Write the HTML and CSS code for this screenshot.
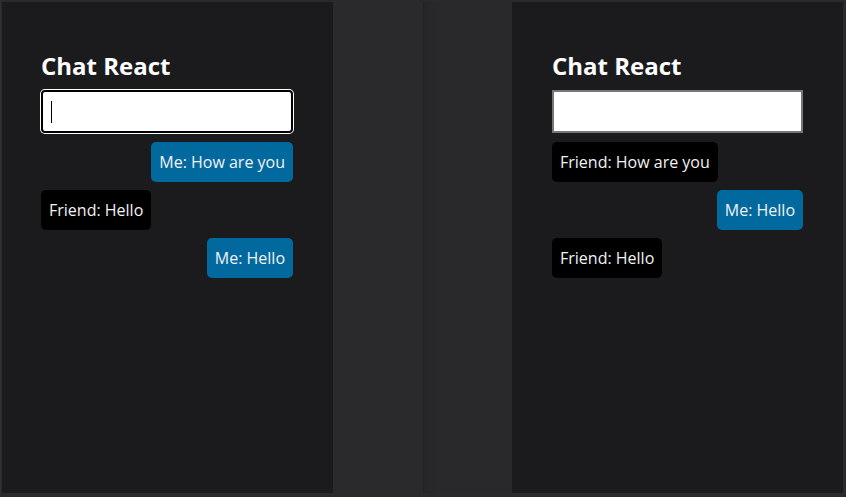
FILE: index.html
```html
<!DOCTYPE html>
<html>
<head>
<meta charset="utf-8">
<link rel="stylesheet" href="styles.css">
</head>
<body>
<div class="frame">
  <div class="half half-left">
    <div class="panel">
      <h2 class="title">Chat React</h2>
      <div class="input focused"><span class="caret"></span></div>
      <div class="messages">
        <div class="msg me">Me: How are you</div>
        <div class="msg friend">Friend: Hello</div>
        <div class="msg me">Me: Hello</div>
      </div>
    </div>
  </div>
  <div class="half half-right">
    <div class="panel">
      <h2 class="title">Chat React</h2>
      <div class="input"></div>
      <div class="messages">
        <div class="msg friend">Friend: How are you</div>
        <div class="msg me">Me: Hello</div>
        <div class="msg friend">Friend: Hello</div>
      </div>
    </div>
  </div>
</div>
</body>
</html>
```
FILE: styles.css
```css
html, body {
  margin: 0;
  padding: 0;
  background: #2a2a2c;
  font-family: "Open Sans", "Noto Sans", sans-serif;
}
.frame {
  display: flex;
  width: 846px;
  height: 497px;
  box-sizing: border-box;
  padding: 2px 3px 4px 0;
  background: #2a2a2c;
  border-left: 1px solid #2f2f31;
}
.half {
  display: flex;
  height: 100%;
}
.half-left {
  width: 421px;
  border-right: 1px solid #222224;
  padding-left: 1px;
}
.half-right {
  flex: 1;
  justify-content: flex-end;
  background: linear-gradient(to right, #262628 0, #29292b 12px);
}
.panel {
  width: 331px;
  height: 100%;
  box-sizing: border-box;
  background: #1b1b1d;
  padding: 47px 40px 0 39px;
  display: flex;
  flex-direction: column;
}
.half-right .panel {
  padding-left: 40px;
  padding-right: 40px;
  width: 331px;
}
.title {
  margin: 0 0 8px 0;
  font-size: 24px;
  font-weight: 700;
  color: #ffffff;
  line-height: 33px;
}
.input {
  height: 43px;
  box-sizing: border-box;
  background: #ffffff;
  border: 2px solid #767676;
  display: flex;
  align-items: center;
  padding-left: 8px;
}
.input.focused {
  border: 2px solid #000000;
  border-radius: 4px;
  box-shadow: 0 0 0 1px #ffffff;
}
.caret {
  width: 1px;
  height: 22px;
  background: #000;
}
.messages {
  display: flex;
  flex-direction: column;
  gap: 8px;
  margin-top: 9px;
}
.msg {
  padding: 8px;
  font-size: 16px;
  line-height: 24px;
  color: #f2f2f2;
  border-radius: 5px;
  white-space: nowrap;
}
.msg.me {
  align-self: flex-end;
  background: #02699f;
}
.msg.friend {
  align-self: flex-start;
  background: #000000;
}
```
